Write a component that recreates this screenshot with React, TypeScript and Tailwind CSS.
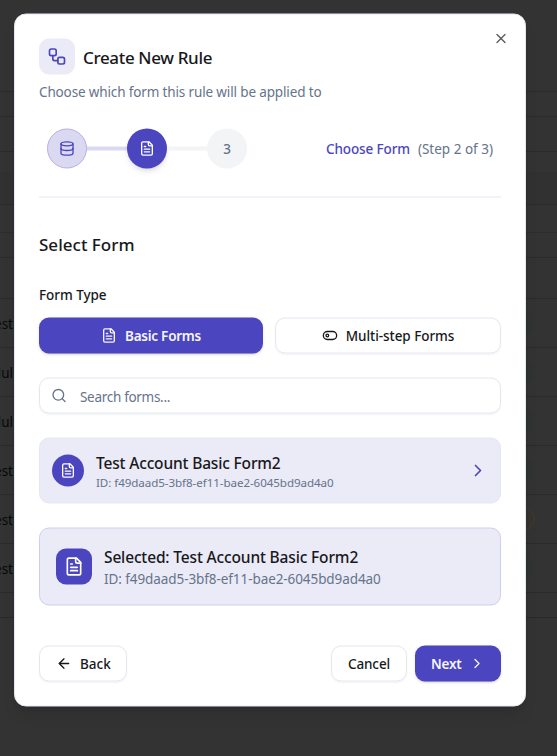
import type { ReactNode } from "react";

type IconProps = { className?: string; children?: ReactNode };

function Icon({ className = "size-4", children }: IconProps) {
  return (
    <svg
      viewBox="0 0 24 24"
      fill="none"
      stroke="currentColor"
      strokeWidth={2}
      strokeLinecap="round"
      strokeLinejoin="round"
      className={`shrink-0 ${className}`}
    >
      {children}
    </svg>
  );
}

const FileText = ({ className }: IconProps) => (
  <Icon className={className}>
    <path d="M15 2H6a2 2 0 0 0-2 2v16a2 2 0 0 0 2 2h12a2 2 0 0 0 2-2V7Z" />
    <path d="M14 2v4a2 2 0 0 0 2 2h4" />
    <path d="M10 9H8" />
    <path d="M16 13H8" />
    <path d="M16 17H8" />
  </Icon>
);

const Workflow = ({ className }: IconProps) => (
  <Icon className={className}>
    <rect width="8" height="8" x="3" y="3" rx="2" />
    <path d="M7 11v4a2 2 0 0 0 2 2h4" />
    <rect width="8" height="8" x="13" y="13" rx="2" />
  </Icon>
);

const Database = () => (
  <Icon>
    <ellipse cx="12" cy="5" rx="9" ry="3" />
    <path d="M3 5V19A9 3 0 0 0 21 19V5" />
    <path d="M3 12A9 3 0 0 0 21 12" />
  </Icon>
);

const ToggleLeft = () => (
  <Icon>
    <rect width="20" height="12" x="2" y="6" rx="6" />
    <circle cx="8" cy="12" r="2" />
  </Icon>
);

const ChevronRight = ({ className }: IconProps) => (
  <Icon className={className}>
    <path d="m9 18 6-6-6-6" />
  </Icon>
);

const tableRows = [
  { label: "est", pill: "border-[#2a3836] bg-[#303332]" },
  { label: "dul", pill: "border-[#2a3836] bg-[#303332]" },
  { label: "dul", pill: "border-[#2a3836] bg-[#303332]" },
  { label: "est", pill: "border-[#2a3836] bg-[#303332]" },
  { label: "est", pill: "border-[#463b26] bg-[#343330]" },
  { label: "est", pill: "border-[#2a3836] bg-[#303332]" },
];

function DimmedPage() {
  return (
    <div className="h-[756px] w-full bg-[#333333] text-[13.5px] text-[#07090c]">
      <div className="h-[92px] border-b border-[#2b2b2b]" />
      <div className="h-[25px] border-b border-[#2b2b2b]" />
      <div className="h-[35px] border-b border-[#2b2b2b]" />
      <div className="h-[20px]" />
      <div className="h-[33px] border-b border-[#2b2b2b] bg-[#313131]" />
      <div className="h-[28px] border-b border-[#2d2d2d]" />
      <div className="h-[25px] border-b border-[#2b2b2b]" />
      <div className="h-[41px] border-b border-[#2b2b2b]" />
      {tableRows.map((row, i) => (
        <div key={i} className="flex h-[49px] items-center justify-between border-b border-[#2b2b2b]">
          <span className="flex w-[13px] justify-end pt-0.5">{row.label}</span>
          <span className={`mr-[22px] h-[22px] w-10 rounded-full border ${row.pill}`} />
        </div>
      ))}
      <div className="h-[25px] border-b border-[#292929]" />
    </div>
  );
}

export default function App() {
  return (
    <div className="relative h-[756px] w-full overflow-hidden font-['Noto_Sans','Open_Sans',sans-serif]">
      <DimmedPage />
      <div className="absolute top-[13px] left-[14px] flex h-[693px] w-[512px] translate-y-[0.5px] flex-col rounded-xl border border-[#e2e8f0] bg-white px-6 pt-6 pb-6 text-[#18181b] shadow-lg">
        <button className="absolute top-4 right-4 opacity-70">
          <Icon>
            <path d="M18 6 6 18" />
            <path d="m6 6 12 12" />
          </Icon>
        </button>

        <div className="flex items-center gap-2">
          <div className="rounded-[10px] bg-[#ebeaf7] p-2 text-[#4b45bf]">
            <Workflow className="size-5" />
          </div>
          <h2 className="pt-0.5 text-[17px] leading-7 font-medium tracking-[-0.35px]">Create New Rule</h2>
        </div>
        <p className="mt-[7px] text-[13.5px] leading-5 tracking-[-0.14px] text-[#64748b]">
          Choose which form this rule will be applied to
        </p>

        <div className="mt-[27px] flex items-center justify-between px-2">
          <div className="flex items-center">
            <div className="flex size-10 items-center justify-center rounded-full border border-[#b5b0e3] bg-[#dbd9f2] text-[#4b45bf]">
              <Database />
            </div>
            <div className="h-1 w-10 bg-[#dbd9f2]" />
            <div className="flex size-10 items-center justify-center rounded-full bg-[#4b45bf] text-white shadow-md">
              <FileText />
            </div>
            <div className="h-1 w-10 bg-[#f3f4f6]" />
            <div className="flex size-10 items-center justify-center rounded-full bg-[#f3f4f6] text-[13.5px] font-medium text-[#64748b]">
              3
            </div>
          </div>
          <div className="flex gap-2 text-[13.5px] leading-5">
            <span className="font-medium tracking-[-0.12px] text-[#4b45bf]">Choose Form</span>
            <span className="text-[#64748b]">(Step 2 of 3)</span>
          </div>
        </div>
        <div className="mt-7 h-px shrink-0 bg-[#e2e8f0]" />

        <h3 className="mt-[33px] text-[17px] leading-7 font-medium tracking-[0.02px]">Select Form</h3>
        <p className="mt-[26px] text-[13.5px] leading-5 font-medium tracking-[-0.05px]">Form Type</p>
        <div className="mt-[13px] flex gap-3 text-[13.5px]">
          <button className="flex h-9 w-[224px] items-center justify-center gap-2 rounded-[10px] bg-[#4b45bf] font-semibold tracking-[-0.25px] text-[#f5f5fc] shadow-sm">
            <FileText />
            Basic Forms
          </button>
          <button className="flex h-9 flex-1 items-center justify-center gap-2 rounded-[10px] border border-[#e2e8f0] font-medium tracking-[-0.05px] shadow-xs">
            <ToggleLeft />
            Multi-step Forms
          </button>
        </div>

        <div className="mt-6 flex h-9 shrink-0 items-center gap-[13px] rounded-[10px] border border-[#e2e8f0] px-[11px] text-[13.5px] text-[#64748b] shadow-xs">
          <Icon>
            <circle cx="11" cy="11" r="8" />
            <path d="m21 21-4.3-4.3" />
          </Icon>
          <span className="pt-0.5 tracking-[-0.3px]">Search forms...</span>
        </div>

        <div className="mt-6 flex h-[66px] shrink-0 items-center rounded-[10px] border border-[#e2e8f0] bg-[#ebeaf7] px-3">
          <div className="flex size-8 items-center justify-center rounded-full bg-[#4b45bf] text-white">
            <FileText />
          </div>
          <div className="ml-3 flex-1">
            <p className="text-[15.5px] leading-6 font-medium tracking-[-0.16px]">Test Account Basic Form2</p>
            <p className="text-[11.6px] leading-4 tracking-[-0.07px] text-[#64748b]">
              ID: f49daad5-3bf8-ef11-bae2-6045bd9ad4a0
            </p>
          </div>
          <ChevronRight className="size-5 text-[#4b45bf]" />
        </div>

        <div className="mt-6 flex h-[78px] shrink-0 items-center gap-3 rounded-[10px] border border-[#d0cdee] bg-[#ebeaf7] px-4">
          <div className="rounded-[10px] bg-[#4b45bf] p-2 text-white">
            <FileText className="size-5" />
          </div>
          <div>
            <p className="text-[15.5px] leading-6 font-medium tracking-[-0.15px]">
              Selected: Test Account Basic Form2
            </p>
            <p className="text-[13.5px] leading-5 tracking-[-0.08px] text-[#64748b]">
              ID: f49daad5-3bf8-ef11-bae2-6045bd9ad4a0
            </p>
          </div>
        </div>

        <div className="mt-auto flex gap-2 text-[13.5px] font-medium">
          <button className="mr-auto flex h-9 w-[88px] items-center gap-2 rounded-[10px] border border-[#e2e8f0] px-4 shadow-xs">
            <Icon>
              <path d="m12 19-7-7 7-7" />
              <path d="M19 12H5" />
            </Icon>
            Back
          </button>
          <button className="h-9 w-[76px] rounded-[10px] border border-[#e2e8f0] tracking-[-0.1px] shadow-xs">
            Cancel
          </button>
          <button className="flex h-9 w-[86px] items-center justify-between rounded-[10px] bg-[#4b45bf] px-4 font-semibold tracking-[-0.2px] text-[#f5f5fc] shadow-sm">
            Next
            <ChevronRight />
          </button>
        </div>
      </div>
    </div>
  );
}
